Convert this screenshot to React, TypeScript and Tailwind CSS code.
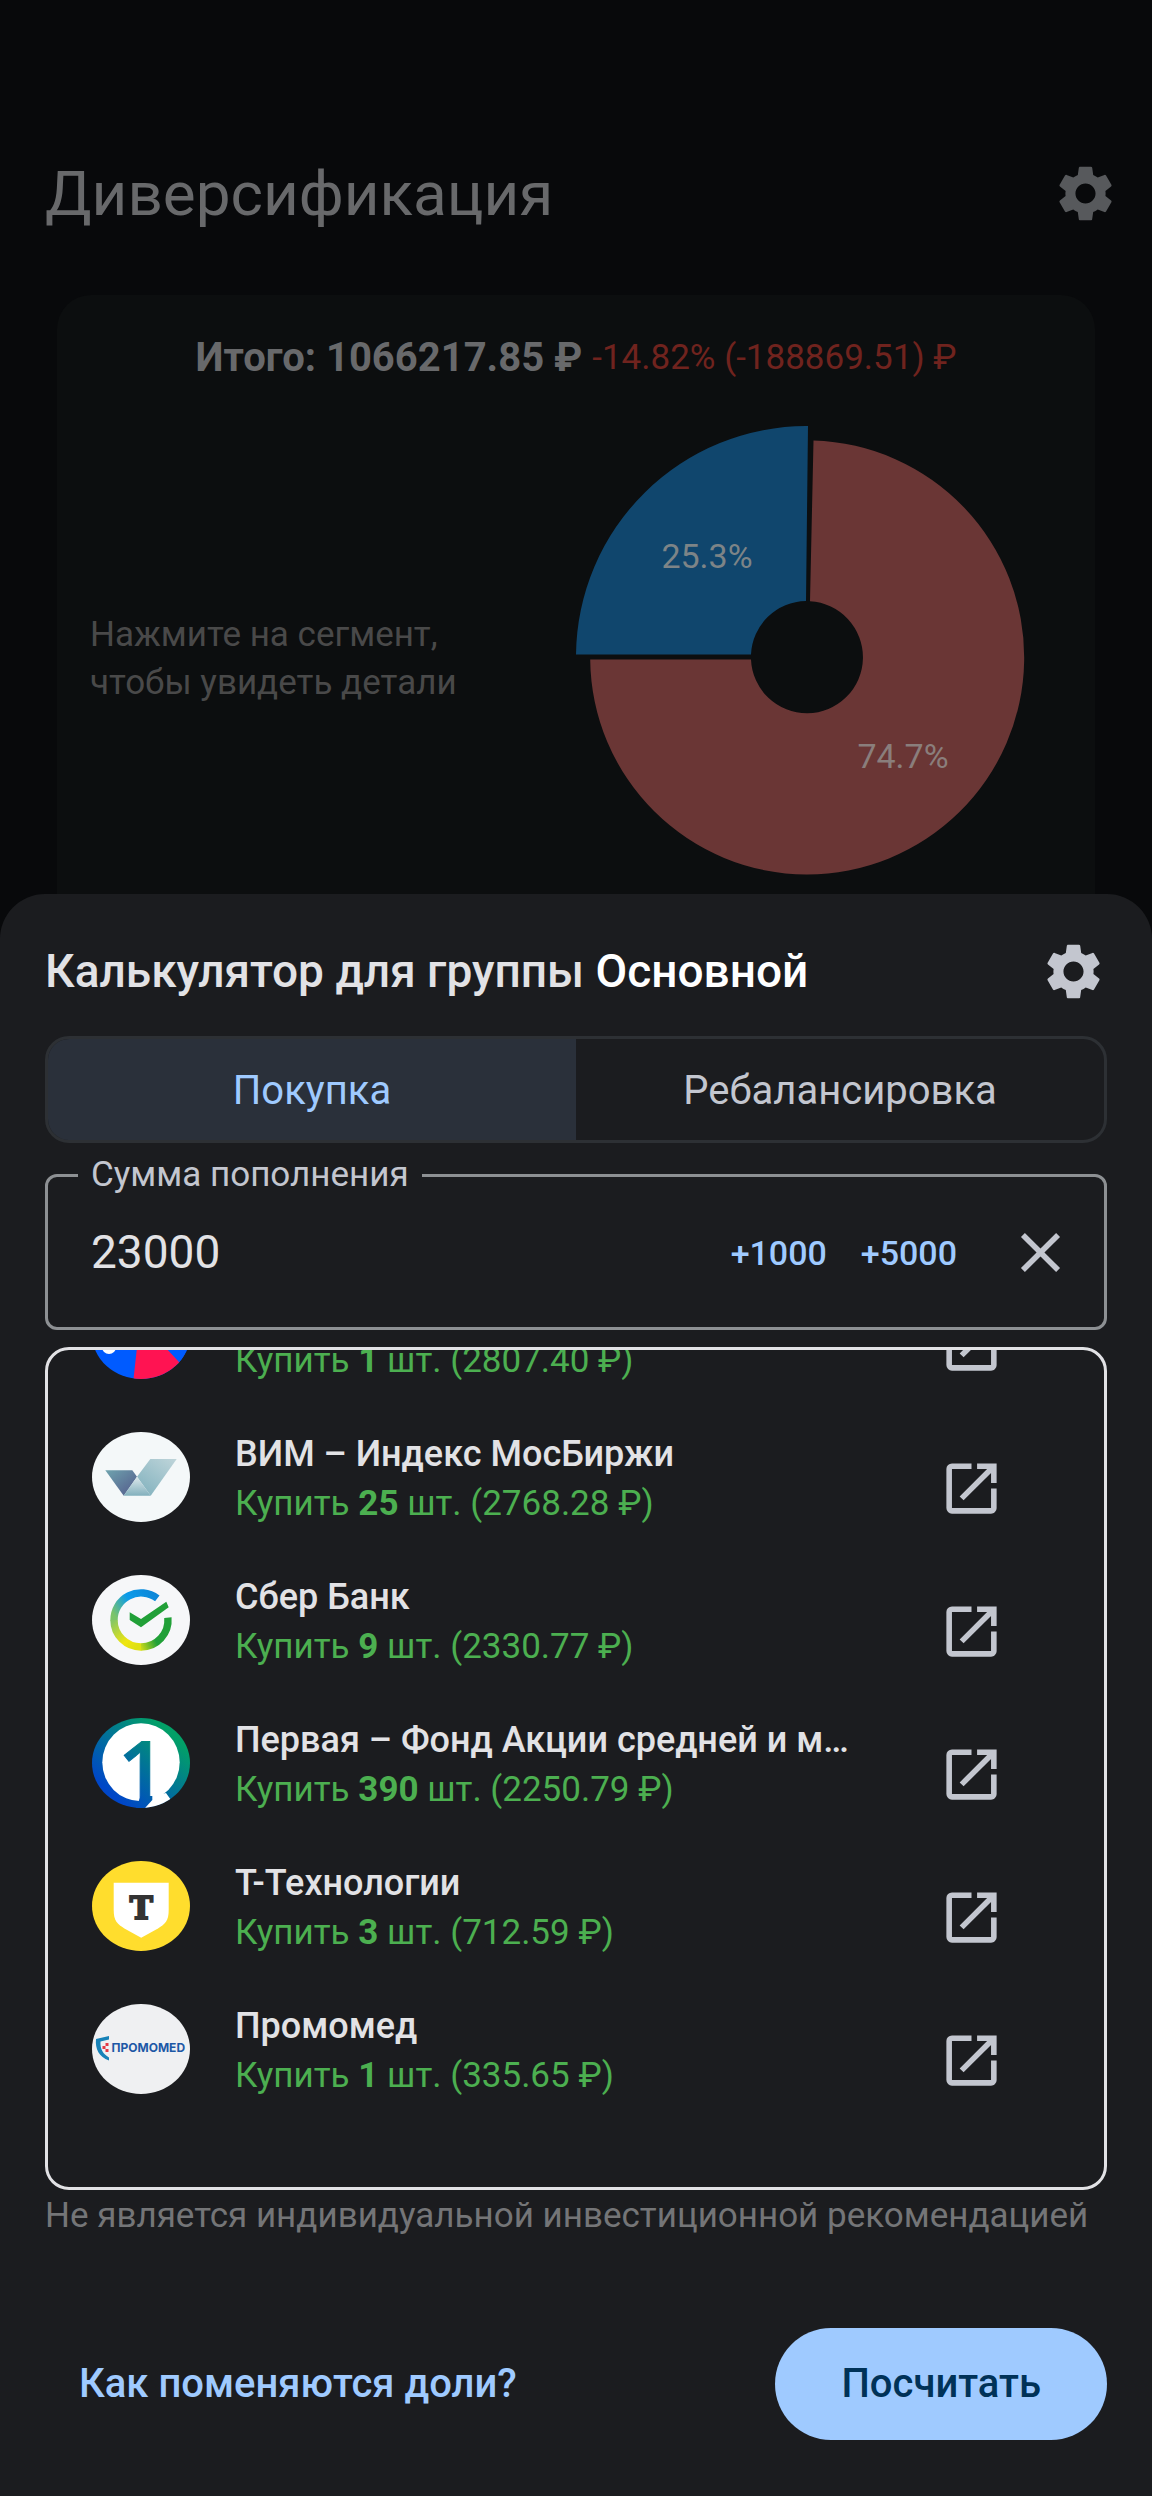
import { useState } from "react"
import type { ReactNode } from "react"
import { MdClose, MdOpenInNew, MdSettings } from "react-icons/md"

const OzonLogo = () => (
  <>
    <rect width="98" height="90" fill="#005bff" />
    <path d="M47 30L44.7 61L41.5 90H98V84L76 61L60 42Z" fill="#ff1352" />
    <path d="M60 42L76 61L87 73L98 84V30Z" fill="#005bff" />
    <circle cx="17" cy="58" r="7" fill="#fff" />
  </>
)

const VimLogo = () => (
  <>
    <defs>
      <linearGradient id="vimLeft" x1="0" y1="0" x2="1" y2="1">
        <stop offset="0" stopColor="#6fa3ae" />
        <stop offset="0.7" stopColor="#5b6f95" />
      </linearGradient>
      <linearGradient id="vimRight" x1="1" y1="0" x2="0.2" y2="1">
        <stop offset="0" stopColor="#bfd5da" />
        <stop offset="1" stopColor="#84b3bf" />
      </linearGradient>
      <linearGradient id="vimBottom" x1="0" y1="0" x2="0" y2="1">
        <stop offset="0" stopColor="#dde9ec" />
        <stop offset="1" stopColor="#82b0bd" />
      </linearGradient>
    </defs>
    <rect width="98" height="90" fill="#f4f8f9" />
    <path d="M13.3 38.3H40.3L45 44.7L31.7 63.7Z" fill="url(#vimLeft)" />
    <path d="M58.3 27H84.7L58.7 63.7L45 44.7Z" fill="url(#vimRight)" />
    <path d="M45 44.7L58.7 63.7H31.7Z" fill="url(#vimBottom)" />
  </>
)

const SberLogo = () => (
  <>
    <defs>
      <linearGradient id="sberTop" gradientUnits="userSpaceOnUse" x1="65" y1="20" x2="26" y2="46">
        <stop offset="0" stopColor="#0d86d8" />
        <stop offset="0.55" stopColor="#0a9bea" />
        <stop offset="1" stopColor="#7cc46a" />
      </linearGradient>
      <linearGradient id="sberLeft" gradientUnits="userSpaceOnUse" x1="22" y1="45" x2="44" y2="72">
        <stop offset="0" stopColor="#86c763" />
        <stop offset="0.7" stopColor="#f0e60f" />
        <stop offset="1" stopColor="#dfe012" />
      </linearGradient>
      <linearGradient id="sberRight" gradientUnits="userSpaceOnUse" x1="48" y1="72" x2="70" y2="62">
        <stop offset="0" stopColor="#cfdc18" />
        <stop offset="0.7" stopColor="#21a038" />
      </linearGradient>
    </defs>
    <rect width="98" height="90" fill="#f6f7f9" />
    <g fill="none" strokeWidth="7.4">
      <path d="M65.3 23.4A27 27 0 0 0 22 45.5" stroke="url(#sberTop)" />
      <path d="M22 45A27 27 0 0 0 49.3 72" stroke="url(#sberLeft)" />
      <path d="M49 72A27 27 0 0 0 75.9 42.6" stroke="url(#sberRight)" />
    </g>
    <path d="M37.7 37.3L49 44L74.3 26.7L76.7 32.3L49 52.3L37.7 45Z" fill="#21a038" />
  </>
)

const PervayaLogo = () => (
  <>
    <defs>
      <linearGradient id="pervaya" gradientUnits="userSpaceOnUse" x1="24" y1="80" x2="80" y2="16">
        <stop offset="0" stopColor="#0046c8" />
        <stop offset="1" stopColor="#02a067" />
      </linearGradient>
    </defs>
    <rect width="98" height="90" fill="url(#pervaya)" />
    <ellipse cx="49" cy="44.3" rx="38.7" ry="39" fill="#fff" />
    <path d="M60.3 78L53 90H85L79 82L74 75Z" fill="#fff" />
    <path d="M48.7 78H60.3V82L53 90H44Z" fill="url(#pervaya)" />
    <text
      x="26"
      y="83"
      fontSize="83"
      className="font-['Open_Sans',sans-serif] font-semibold"
      fill="url(#pervaya)"
      stroke="url(#pervaya)"
    >
      1
    </text>
  </>
)

const TLogo = () => (
  <>
    <rect width="98" height="90" fill="#ffdd2d" />
    <path d="M21.7 21.7H76.7V49C76.7 60 73 63 66 67.5L49.2 76.7L32.4 67.5C25.4 63 21.7 60 21.7 49Z" fill="#fff" />
    <text
      x="49.4"
      y="58.2"
      fontSize="31"
      textAnchor="middle"
      stroke="#333"
      strokeWidth="2"
      className="font-['DejaVu_Serif',serif] font-bold"
      fill="#333"
    >
      Т
    </text>
  </>
)

const PromomedLogo = () => (
  <>
    <rect width="98" height="90" fill="#eff0f2" />
    <path d="M4 35L17 32V35.5L8.5 37.5C8 45 11 50 17 53.5V56.5C7 53 3 45 4 35Z" fill="#1782b8" />
    <path d="M13.5 39H16.5V42H13.5ZM10.5 42H13.5V45H10.5ZM13.5 45H16.5V48H13.5Z" fill="#e23a44" />
    <text x="19.5" y="48" fontSize="12" className="font-[Inter,sans-serif] font-bold" fill="#1d58a6">
      ПРОМОМЕD
    </text>
  </>
)

interface Purchase {
  name: string
  count: number
  sum: string
  logo: ReactNode
}

const PURCHASES: Purchase[] = [
  { name: "Озон", count: 1, sum: "2807.40", logo: <OzonLogo /> },
  { name: "ВИМ – Индекс МосБиржи", count: 25, sum: "2768.28", logo: <VimLogo /> },
  { name: "Сбер Банк", count: 9, sum: "2330.77", logo: <SberLogo /> },
  {
    name: "Первая – Фонд Акции средней и малой капитализации",
    count: 390,
    sum: "2250.79",
    logo: <PervayaLogo />,
  },
  { name: "Т-Технологии", count: 3, sum: "712.59", logo: <TLogo /> },
  { name: "Промомед", count: 1, sum: "335.65", logo: <PromomedLogo /> },
]

const TABS = ["Покупка", "Ребалансировка"]

function Donut() {
  return (
    <svg className="w-[462px] h-[462px] shrink-0" viewBox="0 0 462 462">
      {/* 74.7% slice */}
      <path
        d="M237.5 14.5A217 217 0 1 1 14.2 233.5H175A56 56 0 1 0 234 175.3Z"
        fill="#6a3635"
      />
      {/* 25.3% slice, popped out a little */}
      <path d="M232 0A231 231 0 0 0 0 228.5H175A56 56 0 0 1 230 175Z" fill="#10466d" />
      <g fill="#7d8487" fontSize="34" textAnchor="middle">
        <text x="131" y="142">25.3%</text>
        <text x="327" y="342" fill="#8a7e7c">74.7%</text>
      </g>
    </svg>
  )
}

function PurchaseRow({ name, count, sum, logo }: Purchase) {
  return (
    <li className="h-[143px] flex items-center">
      <svg className="w-[98px] h-[90px] rounded-[50%] shrink-0" viewBox="0 0 98 90">
        {logo}
      </svg>
      <div className="flex-1 min-w-0 pt-1 ml-[45px] mr-[77px] leading-[50px]">
        <p className="truncate text-[36px] font-medium text-[#e2e2e5]">{name}</p>
        <p className="truncate text-[35px] text-[#4caf50]">
          Купить <b className="font-bold">{count}</b> шт. ({sum} ₽)
        </p>
      </div>
      <button aria-label={`Открыть ${name}`} className="pt-6 text-[#c3c6cf]">
        <MdOpenInNew className="w-[67px] h-[67px]" />
      </button>
    </li>
  )
}

export default function App() {
  const [tab, setTab] = useState(TABS[0])
  const [amount, setAmount] = useState("23000")

  const addAmount = (value: number) => {
    setAmount(String((Number(amount) || 0) + value))
  }

  return (
    <div className="min-h-screen flex flex-col bg-[#08090b] font-[Roboto,sans-serif]">
      <header className="flex items-center justify-between pt-[160px] pl-[45px] pr-[33px]">
        <h1 className="text-[62px] leading-[67px] text-[#68696b]">Диверсификация</h1>
        <button aria-label="Настройки" className="text-[#57595c]">
          <MdSettings className="w-[67px] h-[67px]" />
        </button>
      </header>

      <section className="mt-[68px] mx-[57px] pt-[37px] pb-[6px] rounded-t-[34px] bg-[#0c0e0f]">
        <div className="flex items-center justify-center gap-[10px] leading-[52px]">
          <span className="text-[40px] font-bold text-[#68696b]">Итого: 1066217.85 ₽</span>
          <span className="text-[35px] text-[#70231e]">-14.82% (-188869.51) ₽</span>
        </div>
        <div className="mt-[42px] pl-[33px] pr-[57px] flex items-center justify-between">
          <p className="pt-1 text-[35px] leading-[48px] text-[#494949]">
            Нажмите на сегмент,
            <br />
            чтобы увидеть детали
          </p>
          <Donut />
        </div>
      </section>

      {/* Bottom sheet */}
      <main className="flex-1 px-[45px] pt-[44px] pb-[56px] rounded-t-[45px] bg-[#1b1c1f]">
        <div className="flex items-center justify-between">
          <h2 className="text-[46px] leading-[67px] font-medium text-[#e2e2e5]">
            Калькулятор для группы <span className="text-white">Основной</span>
          </h2>
          <button aria-label="Настройки калькулятора" className="text-[#c3c6cf]">
            <MdSettings className="w-[67px] h-[67px]" />
          </button>
        </div>

        <div className="mt-[31px] h-[107px] grid grid-cols-2 border-3 border-[#2d3034] rounded-3xl overflow-hidden text-[40px]">
          {TABS.map((label) => (
            <button
              key={label}
              onClick={() => setTab(label)}
              className={tab === label ? "pt-[2px] bg-[#2a303a] text-[#9fcaff]" : "pt-[2px] text-[#c3c6cf]"}
            >
              {label}
            </button>
          ))}
        </div>

        <fieldset className="mt-2 pl-[30px] pr-[30px] pb-[21px] border-3 border-[#8d9093] rounded-xl min-w-0">
          <legend className="px-[13px] text-[35px] leading-[48px] text-[#c3c6cf]">
            <label htmlFor="amount">Сумма пополнения</label>
          </legend>
          <div className="h-[107px] flex items-center text-[34px] font-medium text-[#9fcaff]">
            <input
              id="amount"
              type="text"
              inputMode="numeric"
              value={amount}
              onChange={(e) => setAmount(e.target.value)}
              className="flex-1 min-w-0 pl-[13px] bg-transparent text-[46px] font-normal text-[#e2e2e5] focus:outline-none"
            />
            <button onClick={() => addAmount(1000)} className="pt-[2px]">
              +1000
            </button>
            <button onClick={() => addAmount(5000)} className="pt-[2px] ml-[34px]">
              +5000
            </button>
            <button aria-label="Очистить" onClick={() => setAmount("")} className="ml-[50px] text-[#c3c6cf]">
              <MdClose className="w-[67px] h-[67px]" />
            </button>
          </div>
        </fieldset>

        <div className="mt-[17px] border-3 border-[#e2e2e5] rounded-3xl overflow-hidden">
          <ul className="-mt-[88px] pl-[44px] pr-[99px] pb-[67px]">
            {PURCHASES.map((item) => (
              <PurchaseRow key={item.name} {...item} />
            ))}
          </ul>
        </div>
        <p className="pt-[2px] text-[35px] leading-[48px] text-[#747577]">
          Не является индивидуальной инвестиционной рекомендацией
        </p>

        <div className="mt-[88px] flex items-center justify-between text-[40px] font-medium">
          <button className="px-[34px] text-[#9fcaff]">Как поменяются доли?</button>
          <button className="h-[112px] px-[66px] rounded-full bg-[#9fcaff] text-[#003258]">Посчитать</button>
        </div>
      </main>
    </div>
  )
}
